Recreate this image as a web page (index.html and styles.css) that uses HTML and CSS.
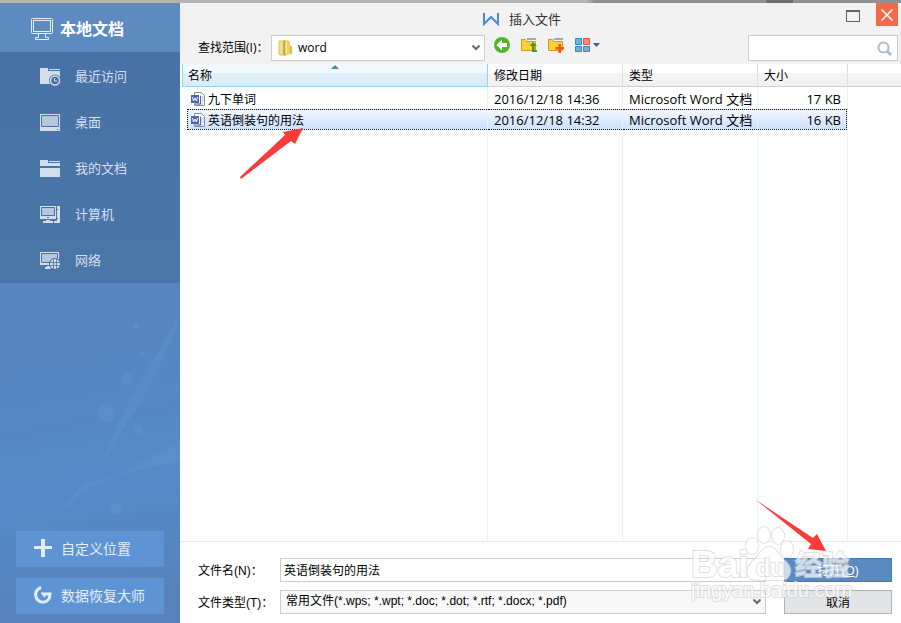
FILE: index.html
```
<!DOCTYPE html>
<html lang="zh-CN">
  <head>
    <meta charset="UTF-8" />
    <meta name="viewport" content="width=device-width, initial-scale=1.0" />
    <title>插入文件</title>
    <link rel="stylesheet" href="styles.css">
  </head>
  <body>
    <div class="dialog">
      <!-- Sidebar -->
      <aside class="sidebar">
        <h2 class="sidebar-title">
          <svg width="23" height="22" viewBox="0 0 23 22" fill="none" stroke="#e6eef8">
            <rect x=".5" y=".5" width="21" height="15" rx="1" />
            <rect x="2.500" y="2.500" width="17" height="11" />
            <path d="M7.500 16v3.500M14.500 16v3.500M4.500 21.500v-2h3M14.500 19.500h3v2h-13" />
          </svg>
          本地文档
        </h2>

        <nav class="places">
          <a href="#">
            <svg width="20" height="18" viewBox="0 0 20 18">
              <path d="M0 0h8v2h12v14H0z" fill="#d3dceb" />
              <path d="M8 0h12v1H8z" fill="#4872a5" />
              <path d="M9 1h11v1H9z" fill="#d3dceb" />
              <path d="M8 2h12v1H8z" fill="#4872a5" />
              <circle cx="15" cy="12.500" r="6" fill="#4872a5" />
              <circle cx="15" cy="12.500" r="4.500" fill="none" stroke="#d3dceb" stroke-width="1.500" />
              <path d="M14.500 10v3H17" fill="none" stroke="#d3dceb" />
            </svg>
            最近访问
          </a>
          <a href="#">
            <svg width="20" height="18" viewBox="0 0 20 18">
              <path d="M0 0h20v17H0z" fill="#d3dceb" />
              <path d="M1.500 1.500h17v11h-17z" fill="#b5c6dd" stroke="#4872a5" />
              <path d="M17 15h1v1h-1z" fill="#4872a5" />
            </svg>
            桌面
          </a>
          <a href="#">
            <svg width="20" height="18" viewBox="0 0 20 18" fill="#d3dceb">
              <path d="M0 0h8v3h12v3H0zM9 1h11v1H9zM0 8h20v9H0z" />
            </svg>
            我的文档
          </a>
          <a href="#">
            <svg width="20" height="18" viewBox="0 0 20 18">
              <path d="M0 0h16v13H0zM17 0h3v17h-3v-4h1v-1h-1V4h1V3h-1zM6 14h4v1h3v2H3v-2h3zM14 15h4v2h-4z" fill="#d3dceb" />
              <path d="M1.500 1.500h13v8h-13z" fill="#b5c6dd" stroke="#4872a5" />
              <path d="M7 11h2v1H7z" fill="#4872a5" />
            </svg>
            计算机
          </a>
          <a href="#">
            <svg width="20" height="18" viewBox="0 0 20 18">
              <path d="M0 0h19v13H0zM7 14h4v1h1v2H5v-2h2z" fill="#d3dceb" />
              <path d="M1.500 1.500h16v9h-16z" fill="#b5c6dd" stroke="#4872a5" />
              <circle cx="15" cy="12" r="6" fill="#4872a5" />
              <circle cx="15" cy="12" r="5" fill="#d3dceb" />
              <path d="M10 10.500h10M10 13.500h10M13.500 7v10M16.500 7v10" stroke="#4872a5" stroke-width=".8" />
            </svg>
            网络
          </a>
        </nav>

        <svg class="sidebar-art" viewBox="0 0 180 240" preserveAspectRatio="none">
          <path d="M180 40L140 120 98 186 128 120 176 38z" fill="#6aa4dc" opacity=".18" />
          <path d="M180 157L80 212 50 240 84 200 180 178z" fill="#79aade" opacity=".15" />
          <g fill="#79b2e6" opacity=".14">
            <circle cx="127" cy="96" r="6" />
            <circle cx="106" cy="130" r="9" />
            <circle cx="138" cy="147" r="5" />
            <circle cx="116" cy="226" r="6" />
            <circle cx="136" cy="43" r="3" />
            <circle cx="142" cy="71" r="3" />
          </g>
        </svg>

        <div class="sidebar-actions">
          <button type="button">
            <svg width="18" height="18" viewBox="0 0 18 18" fill="#e3edf8">
              <path d="M7 0h4v7h7v3h-7v8H7v-8H0V7h7z" />
            </svg>
            自定义位置
          </button>
          <button type="button">
            <svg width="18" height="18" viewBox="0 0 18 18" fill="none" stroke="#e3edf8" stroke-width="3">
              <path d="M7 1.500C3 3 1.500 6 1.600 9.200c.3 4 3.500 7 7.300 7 4 0 7.100-3.200 7.100-8.200H9" />
              <path d="M7.500 6.500L11 11" stroke-width="2" />
            </svg>
            数据恢复大师
          </button>
        </div>
      </aside>

      <!-- Main panel -->
      <main class="main">
        <header class="titlebar">
          <h1>
            <svg width="16" height="13" viewBox="0 0 16 13" fill="none" stroke="#4a8ad8" stroke-width="2">
              <path d="M1 0v11l7-7 7 7V0" />
            </svg>
            插入文件
          </h1>
          <button type="button" class="max-btn" aria-label="最大化"></button>
          <button type="button" class="close-btn" aria-label="关闭">
            <svg width="12" height="12" viewBox="0 0 12 12" stroke="#fff" stroke-width="1.500">
              <path d="M.5.5l11 11M11.500.5l-11 11" />
            </svg>
          </button>
        </header>

        <div class="toolbar">
          <label for="lookIn">查找范围(I)：</label>
          <div class="look-in">
            <svg width="15" height="16" viewBox="0 0 15 16">
              <path d="M1 1h7v14H2l-1-1z" fill="#f2df8c" stroke="#dcc260" />
              <path d="M7 0l5 1v13l-5 2z" fill="#e8cf6a" />
              <path d="M5 1l2-1v16l-2-2z" fill="#c9aa45" />
              <path d="M12 6h2v7l-2 2z" fill="#d8b94e" />
              <path d="M8.500 2v11" stroke="#f8edb5" />
            </svg>
            <select id="lookIn">
              <option>word</option>
            </select>
          </div>
          <div class="tools">
            <button type="button" aria-label="后退">
              <svg width="16" height="16" viewBox="0 0 16 16">
                <circle cx="8" cy="8" r="8" fill="#4fb81f" />
                <path d="M2.500 8L8 2.500V6h5v4H8v3.500z" fill="#fff" />
              </svg>
            </button>
            <button type="button" aria-label="上一级">
              <svg width="16" height="16" viewBox="0 0 16 16">
                <path d="M6 1h9v2H6z" fill="#aaa" />
                <path d="M.5 2.500h4l1 2h9v9H.5z" fill="#fbcf3d" stroke="#d19c16" />
                <path d="M12 5l4 4h-2.500v4H16v2h-5V9H8.500z" fill="#42a01c" />
              </svg>
            </button>
            <button type="button" aria-label="新建文件夹">
              <svg width="16" height="16" viewBox="0 0 16 16">
                <path d="M6 1h9v2H6z" fill="#aaa" />
                <path d="M.5 2.500h4l1 2h9v9H.5z" fill="#fbcf3d" stroke="#d19c16" />
                <path d="M10.500 7h2.500v3h3v2.500h-3V16h-2.500v-3.500h-3V10h3z" fill="#f05423" />
              </svg>
            </button>
            <button type="button" aria-label="视图">
              <svg width="26" height="16" viewBox="0 0 26 16">
                <path d="M.5 1.500h6v6h-6zM.5 9.500h6v5h-6zM8.500 9.500h6v5h-6z" fill="#70b0d4" stroke="#3a87c4" />
                <path d="M8.500 1.500h6v6h-6z" fill="#f58b78" stroke="#e2553c" />
                <path d="M18 6h7l-3.500 4z" fill="#38648f" />
              </svg>
            </button>
          </div>
          <div class="search">
            <input type="text" id="search" aria-label="搜索" />
            <svg width="15" height="15" viewBox="0 0 15 15" fill="none" stroke="#a9bccd">
              <circle cx="6.500" cy="6.500" r="5" stroke-width="2" />
              <path d="M10 10l4 4" stroke-width="3" />
            </svg>
          </div>
        </div>

        <div class="file-list">
          <table>
            <colgroup>
              <col class="col-name" />
              <col class="col-date" />
              <col class="col-type" />
              <col class="col-size" />
              <col />
            </colgroup>
            <thead>
              <tr>
                <th class="sorted">名称</th>
                <th>修改日期</th>
                <th>类型</th>
                <th>大小</th>
                <th></th>
              </tr>
            </thead>
            <tbody>
              <tr>
                <td class="name">
                  <div class="cell">
                    <svg width="14" height="14" viewBox="0 0 14 14">
                      <path d="M3.500 3V.5h7l3 3v10h-10V12" fill="#fff" stroke="#8c8f98" />
                      <path d="M10.500 5h2M10.500 7h2M10.500 9h2M6 12h6" stroke="#a9adb8" />
                      <path d="M0 3h8v8H0z" fill="#4a68b0" />
                      <path d="M1.500 5l1 4L4 6l1.500 3 1-4" fill="none" stroke="#fff" />
                      <path d="M9.500 4v8H3" fill="none" stroke="#4a68b0" />
                    </svg>
                    九下单词
                  </div>
                </td>
                <td><div class="cell">2016/12/18 14:36</div></td>
                <td><div class="cell">Microsoft Word 文档</div></td>
                <td><div class="cell size">17 KB</div></td>
                <td></td>
              </tr>
              <tr class="selected">
                <td class="name">
                  <div class="cell">
                    <svg width="14" height="14" viewBox="0 0 14 14">
                      <path d="M3.500 3V.5h7l3 3v10h-10V12" fill="#fff" stroke="#8c8f98" />
                      <path d="M10.500 5h2M10.500 7h2M10.500 9h2M6 12h6" stroke="#a9adb8" />
                      <path d="M0 3h8v8H0z" fill="#4a68b0" />
                      <path d="M1.500 5l1 4L4 6l1.500 3 1-4" fill="none" stroke="#fff" />
                      <path d="M9.500 4v8H3" fill="none" stroke="#4a68b0" />
                    </svg>
                    英语倒装句的用法
                  </div>
                </td>
                <td><div class="cell">2016/12/18 14:32</div></td>
                <td><div class="cell">Microsoft Word 文档</div></td>
                <td><div class="cell size">16 KB</div></td>
                <td></td>
              </tr>
              <tr class="filler">
                <td></td>
                <td></td>
                <td></td>
                <td></td>
                <td></td>
              </tr>
            </tbody>
          </table>
          <svg class="arrow-file" width="64" height="51" viewBox="0 0 64 51" fill="#fb3b39">
            <path d="M63 0L55 16l-4-3L1 51 0 49 45 7l-2-3z" />
          </svg>
        </div>

        <form class="footer">
          <label for="fileName">文件名(N)：</label>
          <input type="text" id="fileName" value="英语倒装句的用法" />
          <button type="button" class="open-btn">打开(<u>O</u>)</button>

          <label for="fileType">文件类型(T)：</label>
          <select id="fileType">
            <option>常用文件(*.wps; *.wpt; *.doc; *.dot; *.rtf; *.docx; *.pdf)</option>
          </select>
          <button type="button" class="cancel-btn">取消</button>

          <svg class="arrow-open" width="70" height="51" viewBox="0 0 70 51" fill="#fb3b39">
            <path d="M0 0L57 38l4-4 9 17-18-2 3-5z" />
          </svg>

          <svg class="watermark" width="164" height="80" viewBox="0 0 164 80">
            <g class="mark">
              <ellipse cx="61" cy="21" rx="6" ry="8" />
              <ellipse cx="73" cy="10" rx="6" ry="8" />
              <ellipse cx="87" cy="11" rx="6" ry="8" />
              <ellipse cx="96" cy="24" rx="6" ry="8" />
              <path d="M78 22c7 0 9 8 15 13 7 6 8 12 4 17-2 3-6 3-9 3H69c-5 0-9 0-11-3-4-6-1-11 5-17 6-5 8-13 15-13z" />
              <text class="mark-latin" x="0" y="52">Bai</text>
              <text class="mark-du" x="65" y="51">du</text>
              <text class="mark-cjk" x="104" y="50">经验</text>
            </g>
            <text class="mark-url" x="0" y="72">jingyan.baidu.com</text>
          </svg>
        </form>
      </main>
    </div>
  </body>
</html>
```

FILE: styles.css
```
* {
  box-sizing: border-box;
}

body {
  font-family: "Open Sans", "Noto Sans CJK SC", sans-serif;
  font-size: 12px;
  color: #000;
  background: linear-gradient(90deg, #b5b5b5 65%, #919191 66%, #919191 85%, #6e6e6e 85%, #6e6e6e 88%, #919191 88%);
  margin: 0;
  padding-top: 3px;
  height: 100vh;
}

button,
input,
select {
  font: inherit;
  color: inherit;
  border-radius: 0;
  margin: 0;
}

svg {
  display: block;
  flex: none;
}

.dialog {
  display: flex;
  height: 100%;
  background: #fff;
}

/* Sidebar */
.sidebar {
  display: flex;
  flex-direction: column;
  width: 180px;
  flex: none;
  background: linear-gradient(170deg, #5885bd 50%, #548bc7 78%, #5882b9 95%);
}

.sidebar-title {
  display: flex;
  align-items: center;
  gap: 6px;
  height: 49px;
  margin: 0;
  padding: 2px 0 0 31px;
  background: #5d8bc0;
  color: #fff;
  font-size: 16px;
  line-height: 20px;
}

.places {
  padding-top: 1px;
  background: linear-gradient(#4872a5, #4a76a8);
}

.places a {
  display: flex;
  align-items: center;
  gap: 15px;
  height: 46px;
  padding: 0 0 2px 40px;
  color: #d3dff0;
  font-size: 13px;
  text-decoration: none;
}

.places svg {
  margin-top: 4px;
}

.sidebar-art {
  width: 100%;
  flex: 1;
  min-height: 0;
}

.sidebar-actions {
  display: flex;
  flex-direction: column;
  gap: 11px;
  padding: 8px 16px 9px;
}

.sidebar-actions button {
  display: flex;
  align-items: center;
  gap: 9px;
  height: 36px;
  padding: 0 0 2px 18px;
  border: none;
  background: #5f94d4;
  color: #e3edf8;
  font-size: 14px;
}

/* Main panel */
.main {
  display: flex;
  flex-direction: column;
  flex: 1;
  min-width: 0;
}

.titlebar {
  display: flex;
  align-items: flex-start;
  height: 32px;
  padding-right: 3px;
  background: #f2f2f2;
}

.titlebar h1 {
  display: flex;
  flex: 1;
  align-items: center;
  justify-content: center;
  gap: 10px;
  margin: 0;
  padding: 6px 0 0 18px;
  color: #333;
  font-size: 13px;
  font-weight: normal;
  line-height: 20px;
}

.max-btn {
  width: 14px;
  height: 12px;
  margin: 7px 16px 0 0;
  padding: 0;
  border: 1px solid #5c6272;
  border-top-width: 2px;
  background: none;
}

.close-btn {
  display: flex;
  align-items: center;
  justify-content: center;
  width: 22px;
  height: 23px;
  padding: 0;
  border: none;
  background: #f46a48;
}

.toolbar {
  display: flex;
  align-items: center;
  padding: 0 3px 3px 18px;
  background: #f2f2f2;
}

.toolbar label {
  width: 73px;
  padding-bottom: 2px;
  white-space: nowrap;
}

.look-in {
  display: flex;
  align-items: center;
  width: 214px;
  height: 26px;
  padding-left: 6px;
  border: 1px solid #ccc;
  background: #fff;
}

select {
  appearance: none;
  background: #fff url("data:image/svg+xml,%3Csvg xmlns='http://www.w3.org/2000/svg' width='8' height='6' fill='none' stroke='%23666b78' stroke-width='2'%3E%3Cpath d='M.5.5L4 4 7.500.5'/%3E%3C/svg%3E") no-repeat right 4px center;
}

.look-in select {
  flex: 1;
  height: 24px;
  padding: 0 0 2px 5px;
  border: none;
}

.tools {
  display: flex;
  gap: 11px;
  padding-left: 9px;
}

.tools button {
  padding: 0 0 6px;
  border: none;
  background: none;
}

.search {
  display: flex;
  align-items: center;
  width: 150px;
  height: 26px;
  margin-left: auto;
  padding-right: 5px;
  border: 1px solid #ccc;
  background: #fff;
}

.search input {
  flex: 1;
  min-width: 0;
  border: none;
  outline: none;
}

/* File list */
.file-list {
  position: relative;
  flex: 1;
  min-height: 0;
  margin-left: 2px;
}

table {
  width: 100%;
  height: 100%;
  table-layout: fixed;
  border-spacing: 0;
}

.col-name {
  width: 306px;
}

.col-date,
.col-type {
  width: 135px;
}

.col-size {
  width: 90px;
}

th {
  position: relative;
  height: 23px;
  padding: 2px 6px 0;
  border-right: 1px solid #dcdee1;
  border-bottom: 1px solid #d0d0d0;
  background: linear-gradient(#fff 40%, #f4f5f7 41%, #f0f1f3);
  font-weight: normal;
  line-height: 20px;
  text-align: left;
}

th:last-child {
  border-right: none;
}

th.sorted {
  padding-left: 5px;
  border: 1px solid #91d4f4;
  border-top: none;
  background: linear-gradient(#f1f9fd 40%, #e0f1f9 41%, #d8ecf6);
}

th.sorted::after {
  content: "";
  position: absolute;
  top: 1px;
  left: calc(50% - 4px);
  border: 4px solid transparent;
  border-top: none;
  border-bottom-color: #4d8ba5;
}

td {
  height: 21px;
  padding: 0;
  border-right: 1px solid #eaf2fa;
}

tbody tr:first-child td {
  padding-top: 1px;
}

td:last-child {
  border-right: none;
}

td.name {
  padding-left: 5px;
}

.cell {
  display: flex;
  align-items: center;
  gap: 3px;
  height: 21px;
  padding: 0 6px;
  border: 0 dotted #111;
  font-size: 13px;
  white-space: nowrap;
}

.name .cell {
  padding-left: 4px;
  font-size: 12px;
}

.cell.size {
  justify-content: flex-end;
}

.selected .cell {
  border-width: 1px 0;
  background: linear-gradient(#f0f6ff, #cde2fc);
}

.selected .name .cell {
  padding-left: 3px;
  border-left-width: 1px;
}

.selected .cell.size {
  padding-right: 5px;
  border-right-width: 1px;
}

.filler td {
  height: auto;
}

.arrow-file {
  position: absolute;
  top: 64px;
  left: 58px;
}

/* File name and type */
.footer {
  position: relative;
  display: grid;
  grid-template-columns: 82px 1fr 126px;
  grid-auto-rows: 24px;
  row-gap: 8px;
  align-items: center;
  padding: 16px 9px 9px 18px;
  border-top: 1px solid #ebebeb;
  font-family: "Liberation Sans", "Noto Sans CJK SC", sans-serif;
}

.footer label {
  padding-bottom: 2px;
}

.footer input,
.footer select {
  width: 100%;
  height: 24px;
  padding: 0 3px 2px;
  border: 1px solid #ccc;
}

.footer select {
  padding-left: 5px;
  background-color: #f8f8f8;
}

.footer button {
  height: 24px;
  margin-left: 18px;
  padding: 0 0 2px;
  border: 1px solid #adb2bb;
  background: #e3e4e8;
}

.footer .open-btn {
  border-color: #4377b3;
  background: #5b8ac1;
  color: #fff;
}

.arrow-open {
  position: absolute;
  right: 75px;
  bottom: 72px;
}

.watermark {
  position: absolute;
  right: 46px;
  bottom: 18px;
  pointer-events: none;
}

.mark,
.mark-url {
  fill: #fff;
  stroke: #d4d4d4;
  stroke-width: 2px;
  paint-order: stroke;
  opacity: 0.7;
}

.mark-latin,
.mark-du {
  font-size: 37px;
  font-weight: bold;
}

.mark-du {
  font-size: 23px;
}

.mark-cjk {
  font-size: 27px;
  font-weight: bold;
}

.mark-url {
  font-size: 20px;
}
```
